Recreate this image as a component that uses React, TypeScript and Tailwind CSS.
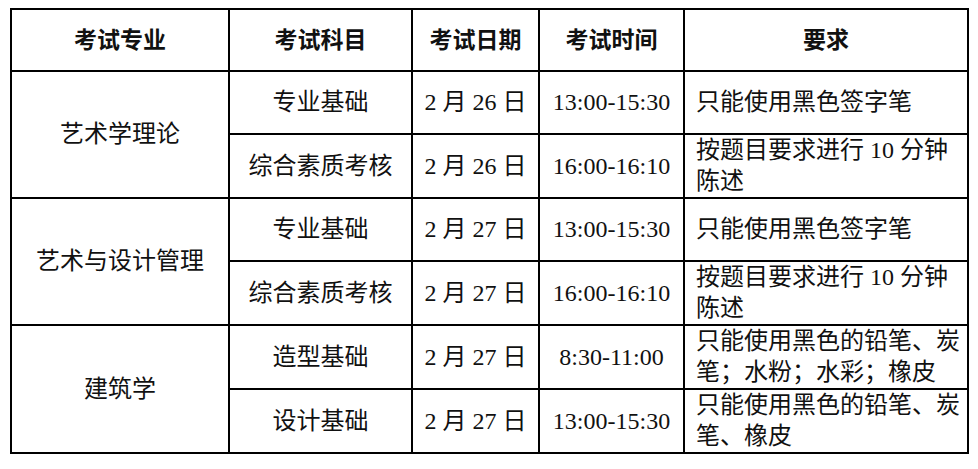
import React from "react";

type Row = {
  major?: string;
  span?: number;
  subject: string;
  date: string;
  time: string;
  req: React.ReactNode;
};

const rows: Row[] = [
  {
    major: "艺术学理论",
    span: 2,
    subject: "专业基础",
    date: "2 月 26 日",
    time: "13:00-15:30",
    req: "只能使用黑色签字笔",
  },
  {
    subject: "综合素质考核",
    date: "2 月 26 日",
    time: "16:00-16:10",
    req: (
      <>
        按题目要求进行 10 分钟
        <br />
        陈述
      </>
    ),
  },
  {
    major: "艺术与设计管理",
    span: 2,
    subject: "专业基础",
    date: "2 月 27 日",
    time: "13:00-15:30",
    req: "只能使用黑色签字笔",
  },
  {
    subject: "综合素质考核",
    date: "2 月 27 日",
    time: "16:00-16:10",
    req: (
      <>
        按题目要求进行 10 分钟
        <br />
        陈述
      </>
    ),
  },
  {
    major: "建筑学",
    span: 2,
    subject: "造型基础",
    date: "2 月 27 日",
    time: "8:30-11:00",
    req: (
      <>
        只能使用黑色的铅笔、炭
        <br />
        笔；水粉；水彩；橡皮
      </>
    ),
  },
  {
    subject: "设计基础",
    date: "2 月 27 日",
    time: "13:00-15:30",
    req: (
      <>
        只能使用黑色的铅笔、炭
        <br />
        笔、橡皮
      </>
    ),
  },
];

const cell = "border-2 border-black text-center align-middle";

export default function App() {
  return (
    <div className="min-h-[469px] w-[978px] bg-white pl-[10px] pt-[8px] text-[#111] font-['Liberation_Serif','Noto_Sans_CJK_SC',serif]">
      <table className="w-[957px] table-fixed border-collapse text-[24px] leading-[31px]">
        <colgroup>
          <col className="w-[218px]" />
          <col className="w-[183px]" />
          <col className="w-[127px]" />
          <col className="w-[145px]" />
          <col className="w-[284px]" />
        </colgroup>
        <thead>
          <tr className="h-[62px] text-[23px] font-bold">
            <th className={cell}>考试专业</th>
            <th className={cell}>考试科目</th>
            <th className={cell}>考试日期</th>
            <th className={cell}>考试时间</th>
            <th className={cell}>要求</th>
          </tr>
        </thead>
        <tbody>
          {rows.map((r, i) => (
            <tr key={i} className="h-[63px]">
              {r.major && (
                <td rowSpan={r.span} className={cell}>
                  {r.major}
                </td>
              )}
              <td className={cell}>{r.subject}</td>
              <td className={cell}>{r.date}</td>
              <td className={cell}>{r.time}</td>
              <td className="border-2 border-black pl-[11px] pr-1 text-left align-middle">{r.req}</td>
            </tr>
          ))}
        </tbody>
      </table>
    </div>
  );
}
